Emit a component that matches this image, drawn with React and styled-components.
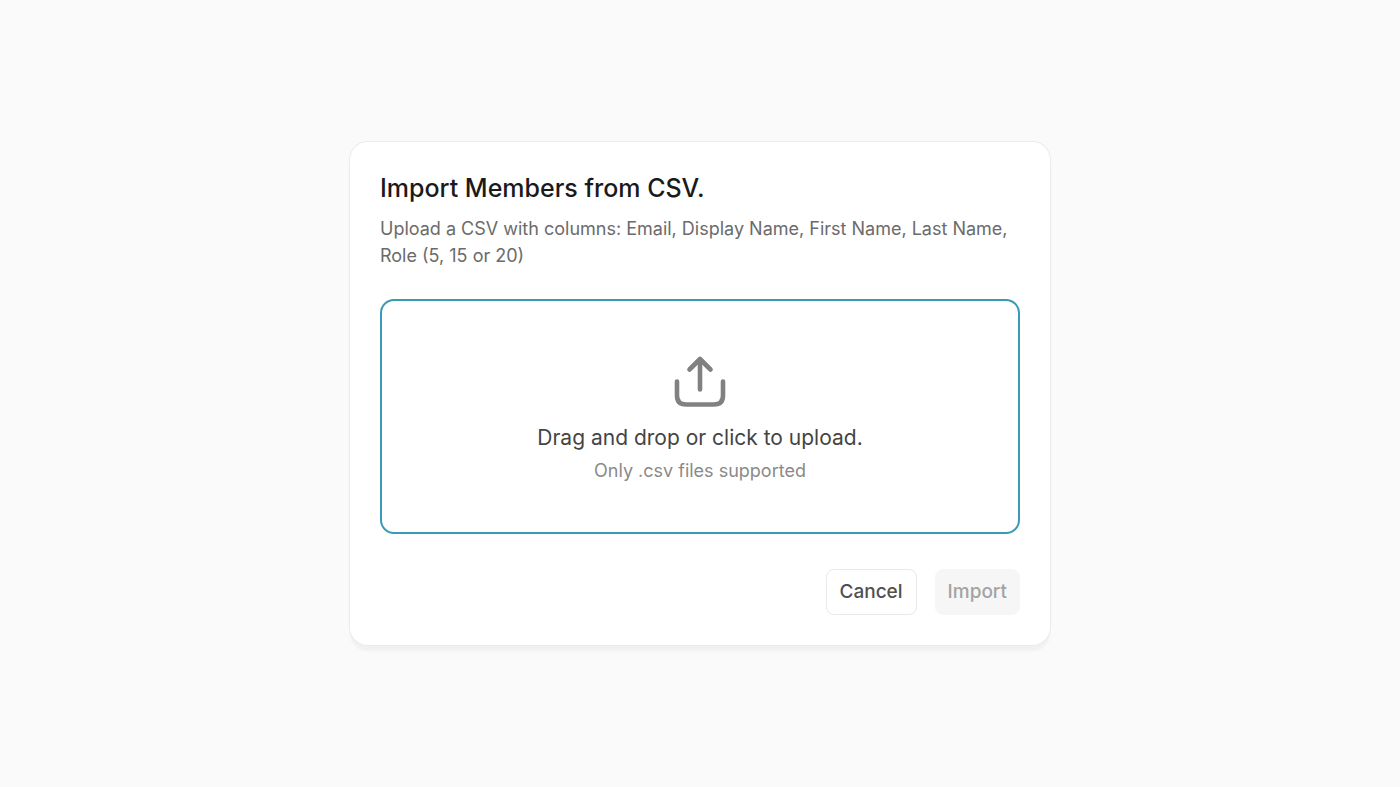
import React from "react";
import styled, { createGlobalStyle } from "styled-components";

const GlobalStyle = createGlobalStyle`
  *, *::before, *::after { box-sizing: border-box; }
  body {
    margin: 0;
    background: #fafafa;
    font-family: Inter, "Liberation Sans", sans-serif;
  }
`;

const Page = styled.main`
  min-height: 100vh;
  display: flex;
  align-items: center;
  justify-content: center;
`;

const Dialog = styled.section`
  width: 50%;
  min-width: 560px;
  padding: 30px;
  border-radius: 18px;
  background: #fff;
  box-shadow: 0 0 0 1px #ebebeb, 0 6px 3px rgba(0, 0, 0, 0.04);
`;

const Title = styled.h1`
  margin: 0;
  font-size: 25px;
  line-height: 32px;
  font-weight: 500;
  color: #1a1a1a;
`;

const Description = styled.p`
  margin: 11px 0 0;
  font-size: 18px;
  line-height: 27px;
  color: #6b6b6b;
`;

const DropZone = styled.label`
  display: flex;
  flex-direction: column;
  align-items: center;
  margin-top: 30px;
  padding: 51px 24px 48px;
  border: 2px solid #3a9ab8;
  border-radius: 14px;
  cursor: pointer;
`;

const FileInput = styled.input`
  position: absolute;
  width: 1px;
  height: 1px;
  opacity: 0;
`;

const UploadIcon = styled.svg`
  width: 60px;
  height: 60px;
  color: #808281;
`;

const Prompt = styled.span`
  margin-top: 11px;
  font-size: 21px;
  line-height: 30px;
  color: #444;
`;

const Hint = styled.span`
  margin-top: 4px;
  font-size: 18px;
  line-height: 27px;
  color: #8a8a8a;
`;

const Actions = styled.div`
  display: flex;
  justify-content: flex-end;
  gap: 18px;
  margin-top: 35px;
`;

const Button = styled.button`
  height: 46px;
  padding: 0 ${(p) => (p.$muted ? 12 : 13)}px;
  border: 1px solid ${(p) => (p.$muted ? "#f6f6f6" : "#e8e8e8")};
  border-radius: 8px;
  background: ${(p) => (p.$muted ? "#f6f6f6" : "#fff")};
  color: ${(p) => (p.$muted ? "#a3a3a3" : "#505050")};
  font: 500 19px/28px Inter, "Liberation Sans", sans-serif;
`;

export default function App() {
  return (
    <Page>
      <GlobalStyle />
      <Dialog role="dialog" aria-labelledby="import-title">
        <Title id="import-title">Import Members from CSV.</Title>
        <Description>
          Upload a CSV with columns: Email, Display Name, First Name, Last Name, Role (5, 15 or 20)
        </Description>
        <DropZone htmlFor="csv-file">
          <FileInput id="csv-file" type="file" accept=".csv" />
          <UploadIcon viewBox="0 0 60 60" fill="none" stroke="currentColor" strokeWidth="4.6" strokeLinecap="round" strokeLinejoin="round" aria-hidden="true">
            <path d="M30 37.500V7M19.500 17.500L30 7L40.500 17.500" />
            <path d="M7 29.500V43.500Q7 52.500 16 52.500H44Q53 52.500 53 43.500V29.500" />
          </UploadIcon>
          <Prompt>Drag and drop or click to upload.</Prompt>
          <Hint>Only .csv files supported</Hint>
        </DropZone>
        <Actions>
          <Button type="button">Cancel</Button>
          <Button type="button" $muted disabled>Import</Button>
        </Actions>
      </Dialog>
    </Page>
  );
}
